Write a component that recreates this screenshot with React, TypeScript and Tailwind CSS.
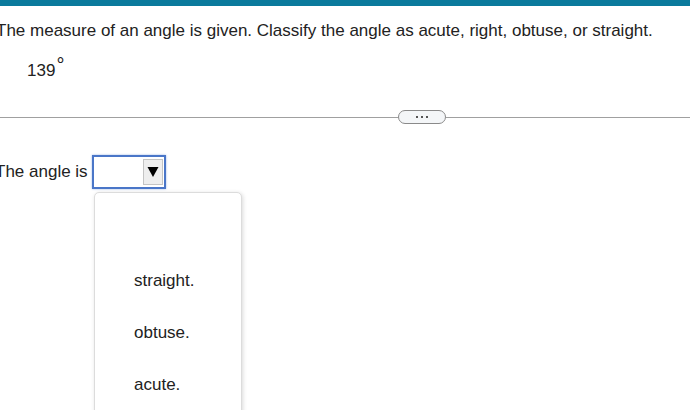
const App = () => {
  return (
    <div className="relative h-[410px] w-[690px] overflow-hidden bg-white font-['Liberation_Sans',Arial,sans-serif] text-[17px] text-[#222]">
      <div className="h-[6px] bg-[#0b7a9c]" />
      <p className="ml-[-4px] mt-[15px] whitespace-nowrap leading-[20px]">
        The measure of an angle is given. Classify the angle as acute, right, obtuse, or straight.
      </p>
      <div className="ml-[27px] mt-[18px] h-[20px] leading-[20px]">
        139<span className="relative top-[-4px] ml-[1px] text-[20px] leading-[20px]">°</span>
      </div>

      <div className="mt-[31px] flex h-[14px] items-center">
        <div className="h-px flex-1 bg-[#a0a0a0]" />
        <div className="flex h-[14px] w-[48px] items-center justify-center gap-[3px] rounded-[7px] border border-[#8a8a8a] bg-[#f4f6f8]">
          <span className="h-[2px] w-[2px] bg-[#555]" />
          <span className="h-[2px] w-[2px] bg-[#555]" />
          <span className="h-[2px] w-[2px] bg-[#555]" />
        </div>
        <div className="h-px w-[244px] bg-[#a0a0a0]" />
      </div>

      <div className="mt-[31px] flex items-center">
        <span className="ml-[-5px] mr-[4px] whitespace-nowrap leading-[20px]">The angle is</span>
        <div className="flex h-[34px] w-[74px] items-center justify-end border-2 border-[#4a76c8] bg-white pr-[1px] shadow-[0_0_2px_#9db6e6]">
          <div className="flex h-[26px] w-[20px] items-center justify-center border border-[#c4c4c4] bg-[#eeeeee]">
            <svg width="12" height="12" viewBox="0 0 12 12">
              <path d="M0.5 1 L11.5 1 L6 11 Z" fill="#000" />
            </svg>
          </div>
        </div>
      </div>

      <div className="absolute left-[94px] top-[192px] h-[230px] w-[148px] rounded-t-[5px] border border-[#dcdcdc] bg-white shadow-[1px_1px_4px_rgba(0,0,0,0.15)]">
        <ul className="pl-[39px] pt-[78px] leading-[20px]">
          <li className="h-[52px]">straight.</li>
          <li className="h-[52px]">obtuse.</li>
          <li className="h-[52px]">acute.</li>
        </ul>
      </div>
    </div>
  );
};

export default App;
